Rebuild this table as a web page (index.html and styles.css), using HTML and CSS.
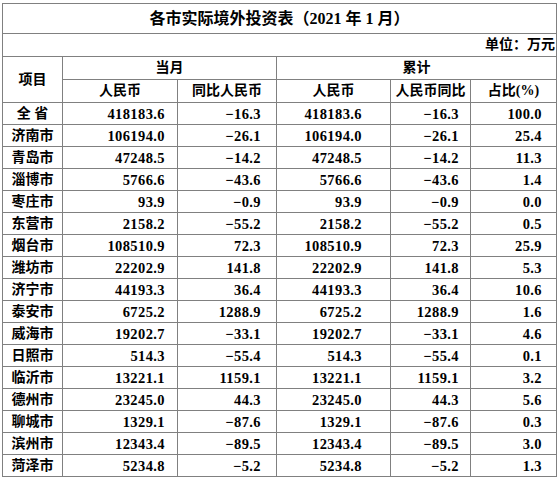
FILE: index.html
```html
<!DOCTYPE html>
<html lang="zh-CN">
<head>
    <meta charset="UTF-8">
    <title>各市实际境外投资表</title>
    <link rel="stylesheet" href="styles.css">
</head>
<body>

    <table class="report">
        <colgroup>
            <col class="c-name">
            <col class="c-month">
            <col class="c-month-yoy">
            <col class="c-total">
            <col class="c-total-yoy">
            <col class="c-share">
        </colgroup>
        <thead>
            <tr class="title-row">
                <th colspan="6">各市实际境外投资表（2021 年 1 月）</th>
            </tr>
            <tr class="unit-row">
                <th colspan="6">单位：万元</th>
            </tr>
            <tr class="head-row">
                <th rowspan="2">项目</th>
                <th colspan="2">当月</th>
                <th colspan="3">累计</th>
            </tr>
            <tr class="head-row">
                <th>人民币</th>
                <th>同比人民币</th>
                <th>人民币</th>
                <th>人民币同比</th>
                <th>占比(%)</th>
            </tr>
        </thead>
        <tbody id="rows"></tbody>
    </table>

    <script>
        // 各市数据：名称, 当月人民币, 同比, 累计人民币, 同比, 占比
        const data = [
            ["全 省", "418183.6", "−16.3", "418183.6", "−16.3", "100.0"],
            ["济南市", "106194.0", "−26.1", "106194.0", "−26.1", "25.4"],
            ["青岛市", "47248.5", "−14.2", "47248.5", "−14.2", "11.3"],
            ["淄博市", "5766.6", "−43.6", "5766.6", "−43.6", "1.4"],
            ["枣庄市", "93.9", "−0.9", "93.9", "−0.9", "0.0"],
            ["东营市", "2158.2", "−55.2", "2158.2", "−55.2", "0.5"],
            ["烟台市", "108510.9", "72.3", "108510.9", "72.3", "25.9"],
            ["潍坊市", "22202.9", "141.8", "22202.9", "141.8", "5.3"],
            ["济宁市", "44193.3", "36.4", "44193.3", "36.4", "10.6"],
            ["泰安市", "6725.2", "1288.9", "6725.2", "1288.9", "1.6"],
            ["威海市", "19202.7", "−33.1", "19202.7", "−33.1", "4.6"],
            ["日照市", "514.3", "−55.4", "514.3", "−55.4", "0.1"],
            ["临沂市", "13221.1", "1159.1", "13221.1", "1159.1", "3.2"],
            ["德州市", "23245.0", "44.3", "23245.0", "44.3", "5.6"],
            ["聊城市", "1329.1", "−87.6", "1329.1", "−87.6", "0.3"],
            ["滨州市", "12343.4", "−89.5", "12343.4", "−89.5", "3.0"],
            ["菏泽市", "5234.8", "−5.2", "5234.8", "−5.2", "1.3"]
        ];

        const tbody = document.getElementById('rows');
        data.forEach(function(row) {
            const tr = document.createElement('tr');
            row.forEach(function(value) {
                const td = document.createElement('td');
                td.innerText = value;
                tr.appendChild(td);
            });
            tbody.appendChild(tr);
        });
    </script>

</body>
</html>
```

FILE: styles.css
```css
* {
    margin: 0;
    padding: 0;
    box-sizing: border-box;
}
body {
    background: #ffffff;
    color: #000000;
    padding: 3px 0 0 2px;
    font-family: "Liberation Serif", "Noto Sans CJK SC", serif;
    font-weight: bold;
}
.report {
    table-layout: fixed;
    width: 554px;
    border-collapse: collapse;
}
.c-name { width: 60px; }
.c-month { width: 115px; }
.c-month-yoy { width: 99px; }
.c-total { width: 114px; }
.c-total-yoy { width: 80px; }
.c-share { width: 86px; }

.report th,
.report td {
    border: 1px solid #808080;
    font-size: 14px;
    line-height: 16px;
    white-space: nowrap;
    overflow: hidden;
}
.report th {
    font-weight: bold;
    text-align: center;
}
.title-row th {
    height: 30px;
    font-size: 16px;
}
.unit-row th {
    height: 23px;
    text-align: right;
    padding-right: 1px;
}
.head-row th {
    height: 23px;
}
.report td {
    height: 22px;
    text-align: right;
    font-size: 14.5px;
    letter-spacing: 0.4px;
}
.report td:nth-child(1) {
    text-align: center;
    font-size: 14px;
    letter-spacing: 0;
}
.report td:nth-child(2) { padding-right: 12px; }
.report td:nth-child(3) { padding-right: 15px; }
.report td:nth-child(4) { padding-right: 28px; }
.report td:nth-child(5) { padding-right: 11px; }
.report td:nth-child(6) { padding-right: 14px; }
```
